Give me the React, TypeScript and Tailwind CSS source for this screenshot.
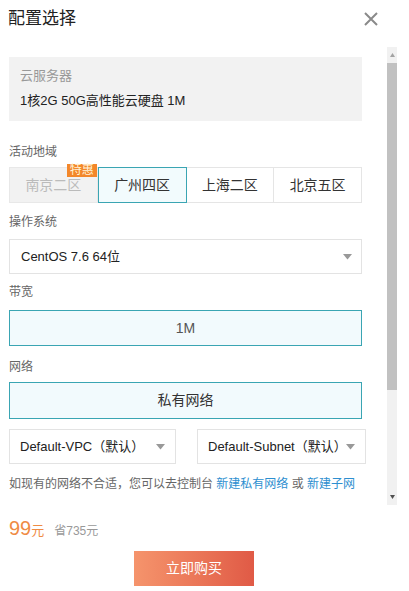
const font = "font-['Liberation_Sans','Noto_Sans_CJK_SC',sans-serif]";

const Caret = () => (
  <svg width="9" height="6" viewBox="0 0 9 6" className="shrink-0">
    <path d="M0 0h9L4.5 5.5z" fill="#999" />
  </svg>
);

const Label = ({ children, className }: { children: React.ReactNode; className: string }) => (
  <div className={`text-[12px] leading-[16px] text-[#666] ${className}`}>{children}</div>
);

const regions = ["南京二区", "广州四区", "上海二区", "北京五区"];

const ScrollBar = () => (
  <div className="flex h-full w-[10px] flex-col bg-[#f1f1f1]">
    <div className="flex h-[16px] items-center justify-center">
      <svg width="5" height="4" viewBox="0 0 5 4">
        <path d="M0 4h5L2.5 0z" fill="#a3a3a3" />
      </svg>
    </div>
    <div className="h-[327px] bg-[#c1c1c1]" />
    <div className="flex-1" />
    <div className="flex h-[16px] items-center justify-center">
      <svg width="5" height="4" viewBox="0 0 5 4">
        <path d="M0 0h5L2.5 4z" fill="#505050" />
      </svg>
    </div>
  </div>
);

export default function App() {
  return (
    <div className={`h-[591px] w-[409px] overflow-hidden bg-white ${font}`}>
      <div className="flex h-[47px] items-start justify-between pl-[8px] pr-[31px] pt-[7px]">
        <div className="text-[17px] leading-[24px] text-[#222]">配置选择</div>
        <svg width="14" height="14" viewBox="0 0 14 14" className="mt-[5px]">
          <path d="M1 1l12 12M13 1L1 13" stroke="#8a8a8a" strokeWidth="2" />
        </svg>
      </div>

      <div className="flex h-[458px]">
        <div className="w-[387px] overflow-hidden pl-[9px] pr-[25px]">
          <div className="mt-[10px] bg-[#f2f2f2] pb-[8px] pl-[11px] pt-[6px] text-[13px] leading-[25px]">
            <div className="text-[#999]">云服务器</div>
            <div className="text-[#222]">1核2G 50G高性能云硬盘 1M</div>
          </div>

          <Label className="mt-[23px]">活动地域</Label>
          <div className="mt-[7px] flex h-[36px]">
            {regions.map((r, i) => (
              <div
                key={r}
                className={`relative flex flex-1 items-center justify-center text-[14px] ${
                  i === 0
                    ? "border border-[#e8e8e8] bg-[#f2f2f2] text-[#bbb]"
                    : i === 1
                      ? "border border-[#3aa5b3] bg-[#f2fbfd] text-[#333]"
                      : "border border-l-0 border-[#e5e5e5] bg-white text-[#333]"
                }`}
              >
                {r}
                {i === 0 && (
                  <span className="absolute right-[0px] top-[-4px] bg-[#f3872a] px-[3px] text-[12px] leading-[13px] text-[#fff3d6]">
                    特惠
                  </span>
                )}
              </div>
            ))}
          </div>

          <Label className="mt-[11px]">操作系统</Label>
          <div className="mt-[9px] flex h-[35px] items-center justify-between border border-[#e3e3e3] pl-[11px] pr-[9px] text-[13px] text-[#222]">
            CentOS 7.6 64位
            <Caret />
          </div>

          <Label className="mt-[10px]">带宽</Label>
          <div className="mt-[10px] flex h-[36px] items-center justify-center border border-[#3aa5b3] bg-[#f2fafd] text-[14px] text-[#555]">
            1M
          </div>

          <Label className="mt-[13px]">网络</Label>
          <div className="mt-[7px] flex h-[37px] items-center justify-center border border-[#3aa5b3] bg-[#f2fafd] text-[14px] text-[#333]">
            私有网络
          </div>

          <div className="mt-[10px] flex h-[35px] w-[357px] justify-between text-[13px] text-[#222]">
            <div className="flex w-[167px] items-center justify-between border border-[#e3e3e3] pl-[10px] pr-[10px]">
              Default-VPC（默认）
              <Caret />
            </div>
            <div className="flex w-[169px] items-center justify-between border border-[#e3e3e3] pl-[10px] pr-[10px]">
              Default-Subnet（默认）
              <Caret />
            </div>
          </div>

          <div className="mt-[12px] whitespace-nowrap text-[12px] leading-[16px] text-[#666]">
            如现有的网络不合适，您可以去控制台 <span className="text-[#2d8fd0]">新建私有网络</span> 或{" "}
            <span className="text-[#2d8fd0]">新建子网</span>
          </div>
        </div>
        <ScrollBar />
      </div>

      <div className="mt-[11px] flex items-baseline pl-[9px]">
        <span className="text-[20px] leading-[24px] text-[#ef8b44]">99</span>
        <span className="text-[13px] text-[#ef8b44]">元</span>
        <span className="ml-[10px] text-[12px] text-[#999]">省735元</span>
      </div>

      <div className="mt-[10px] flex pl-[134px]">
        <div className="flex h-[35px] w-[120px] items-center justify-center bg-gradient-to-r from-[#f5946c] to-[#e05a46] text-[14px] text-white">
          立即购买
        </div>
      </div>
    </div>
  );
}
